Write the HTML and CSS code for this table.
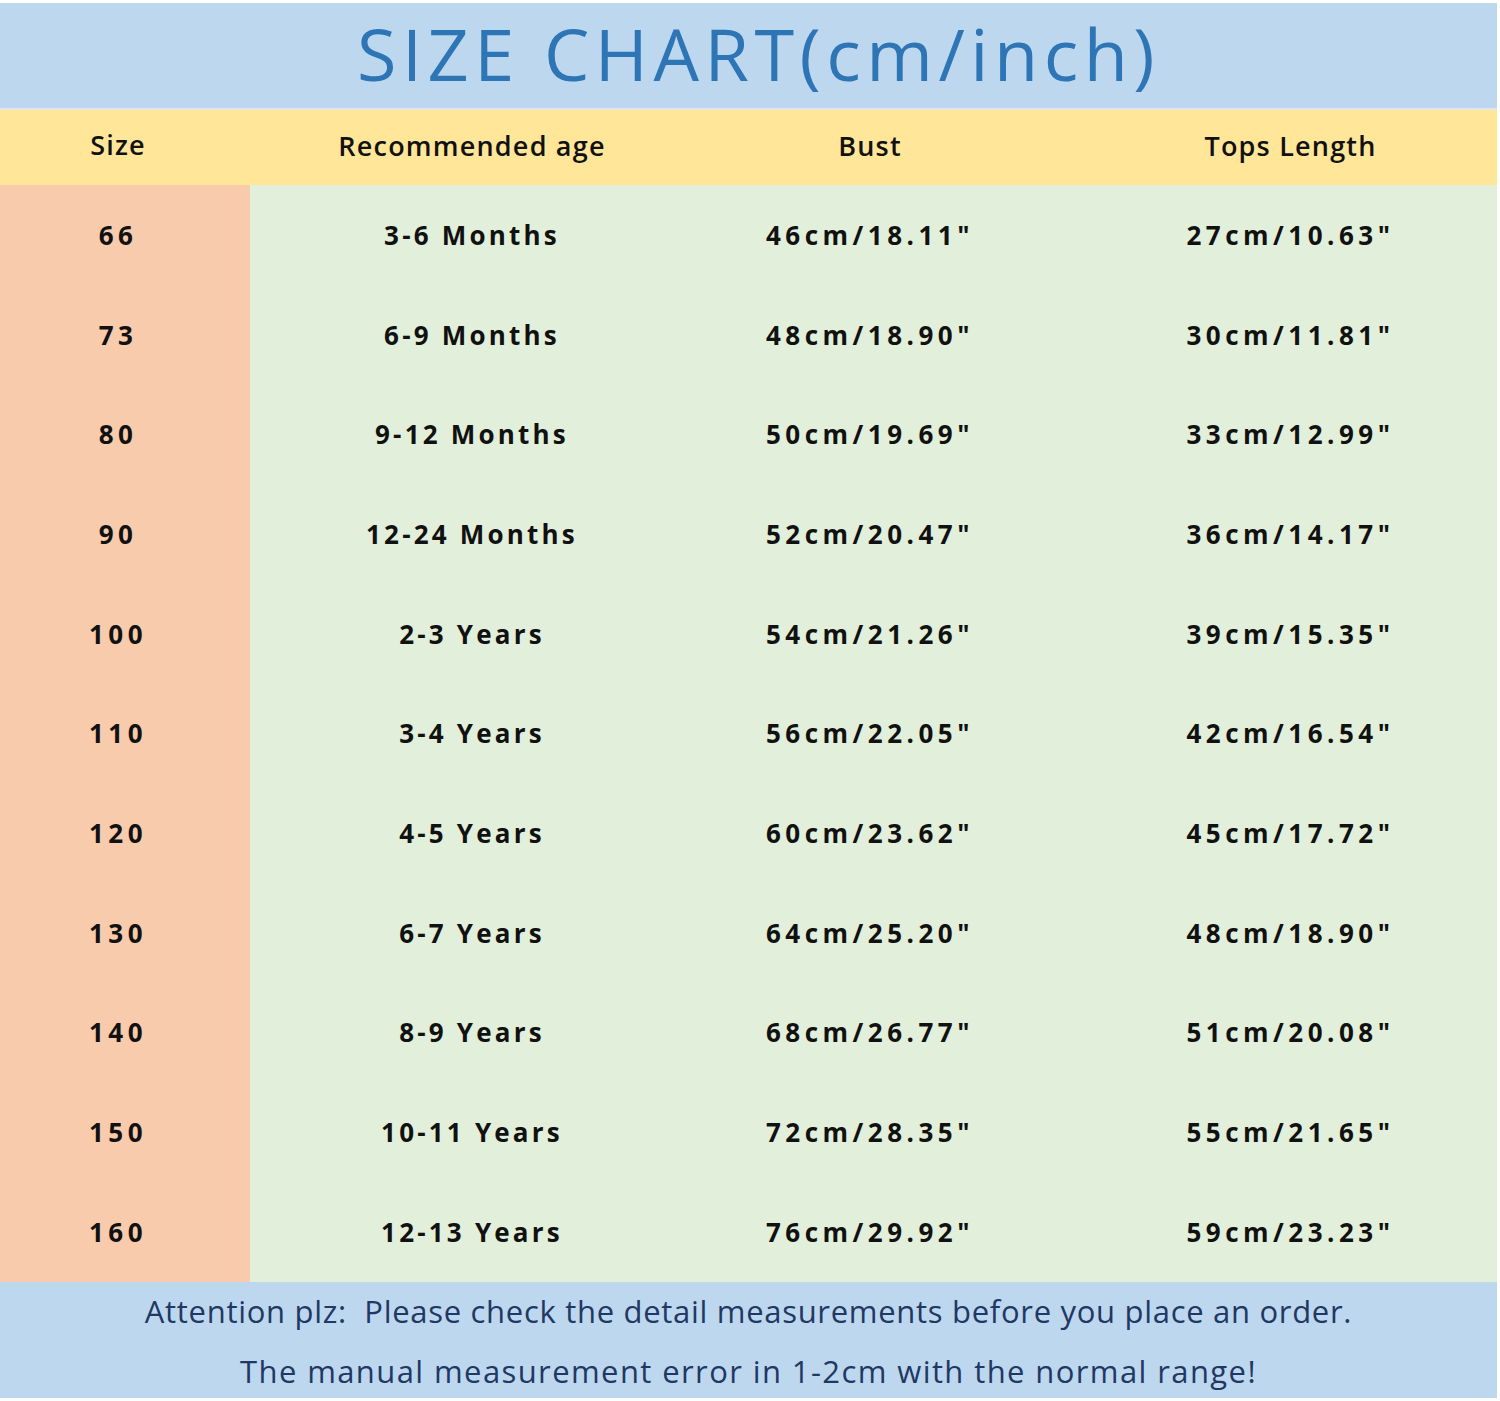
FILE: index.html
```html
<!DOCTYPE html>
<html>
<head>
<meta charset="utf-8">
<link rel="stylesheet" href="styles.css">
</head>
<body>
<div class="chart">
  <div class="title">SIZE CHART(cm/inch)</div>
  <div class="row head">
    <div class="c c1">Size</div>
    <div class="c c2">Recommended age</div>
    <div class="c c3">Bust</div>
    <div class="c c4">Tops Length</div>
  </div>
  <div class="body">
    <div class="row"><div class="c c1">66</div><div class="c c2">3-6 Months</div><div class="c c3">46cm/18.11"</div><div class="c c4">27cm/10.63"</div></div>
    <div class="row"><div class="c c1">73</div><div class="c c2">6-9 Months</div><div class="c c3">48cm/18.90"</div><div class="c c4">30cm/11.81"</div></div>
    <div class="row"><div class="c c1">80</div><div class="c c2">9-12 Months</div><div class="c c3">50cm/19.69"</div><div class="c c4">33cm/12.99"</div></div>
    <div class="row"><div class="c c1">90</div><div class="c c2">12-24 Months</div><div class="c c3">52cm/20.47"</div><div class="c c4">36cm/14.17"</div></div>
    <div class="row"><div class="c c1">100</div><div class="c c2">2-3 Years</div><div class="c c3">54cm/21.26"</div><div class="c c4">39cm/15.35"</div></div>
    <div class="row"><div class="c c1">110</div><div class="c c2">3-4 Years</div><div class="c c3">56cm/22.05"</div><div class="c c4">42cm/16.54"</div></div>
    <div class="row"><div class="c c1">120</div><div class="c c2">4-5 Years</div><div class="c c3">60cm/23.62"</div><div class="c c4">45cm/17.72"</div></div>
    <div class="row"><div class="c c1">130</div><div class="c c2">6-7 Years</div><div class="c c3">64cm/25.20"</div><div class="c c4">48cm/18.90"</div></div>
    <div class="row"><div class="c c1">140</div><div class="c c2">8-9 Years</div><div class="c c3">68cm/26.77"</div><div class="c c4">51cm/20.08"</div></div>
    <div class="row"><div class="c c1">150</div><div class="c c2">10-11 Years</div><div class="c c3">72cm/28.35"</div><div class="c c4">55cm/21.65"</div></div>
    <div class="row"><div class="c c1">160</div><div class="c c2">12-13 Years</div><div class="c c3">76cm/29.92"</div><div class="c c4">59cm/23.23"</div></div>
  </div>
  <div class="foot">
    <div class="fl fl1">Attention plz:&nbsp; Please check the detail measurements before you place an order.</div>
    <div class="fl fl2">The manual measurement error in 1-2cm with the normal range!</div>
  </div>
</div>
</body>
</html>
```
FILE: styles.css
```css
html, body {
  margin: 0;
  padding: 0;
  background: #ffffff;
}
.chart {
  width: 1497px;
  padding-top: 3px;
  font-family: "Open Sans", "DejaVu Sans", sans-serif;
  color: #111111;
}
.title {
  height: 107px;
  background: #bdd7ee;
  color: #2e75b6;
  font-family: "Open Sans", sans-serif;
  font-weight: 400;
  font-size: 72px;
  line-height: 100px;
  text-align: center;
  letter-spacing: 5.5px;
  padding-left: 20px;
  box-sizing: border-box;
  border-bottom: 2px solid #dfe6ea;
}
.row {
  display: grid;
  grid-template-columns: 250px 444px 352px 451px;
  height: 99.7px;
  align-items: center;
}
.row.head {
  height: 75px;
  background: #ffe699;
}
.body {
  background: #e2efda;
}
.body .c1 {
  background: #f8cbad;
  align-self: stretch;
  display: flex;
  align-items: center;
  justify-content: center;
}
.c {
  text-align: center;
  font-size: 26px;
  font-weight: 700;
  letter-spacing: 4.5px;
  height: 100%;
  display: flex;
  align-items: center;
  justify-content: center;
}
.c2 { letter-spacing: 3.2px; }
.c1 { padding-right: 14px; box-sizing: border-box; }
.c4 { padding-left: 38px; box-sizing: border-box; }
.head .c {
  font-weight: 600;
  font-size: 27px;
  letter-spacing: 1.2px;
}
.head .c1 { margin-top: -3px; }
.head .c { padding-bottom: 4px; }
.foot {
  background: #bdd7ee;
  height: 116px;
  color: #1f3864;
  font-size: 31px;
  text-align: center;
}
.fl1 { line-height: 56px; letter-spacing: 0.7px; padding-top: 1px; }
.fl2 { line-height: 64px; letter-spacing: 1.4px; }
```
